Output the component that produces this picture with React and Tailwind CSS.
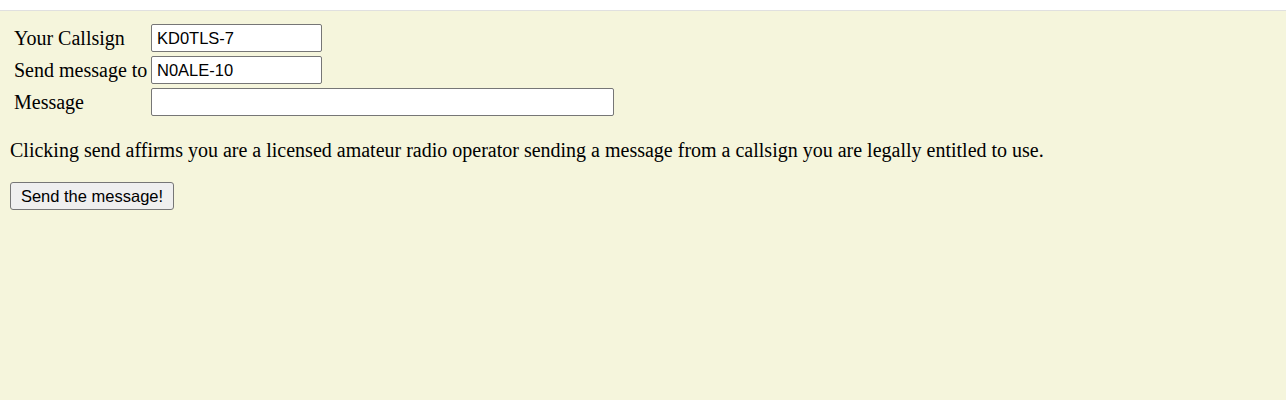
const serif = { fontFamily: '"Liberation Serif", "Times New Roman", serif' };

function Field({ label, value, width }) {
  return (
    <div className="flex h-[32px] items-center">
      <label className="w-[141px] shrink-0 whitespace-nowrap pl-[4px] text-[20px] leading-[23px] text-black">{label}</label>
      <input
        type="text"
        defaultValue={value}
        className={`${width} h-[28px] shrink-0 rounded-[2px] border border-[#767676] bg-white px-[5px] font-['Liberation_Sans',Arial,sans-serif] text-[16.5px] text-black outline-none`}
      />
    </div>
  );
}

export default function App() {
  return (
    <div className="flex h-screen flex-col bg-[#f5f5dc]" style={serif}>
      <div className="h-[11px] shrink-0 border-b border-[#e0e0e0] bg-white" />
      <div className="px-[10px] pt-[11px]">
        <div className="flex flex-col">
          <Field label="Your Callsign" value="KD0TLS-7" width="w-[171px]" />
          <Field label="Send message to" value="N0ALE-10" width="w-[171px]" />
          <Field label="Message" value="" width="w-[463px]" />
        </div>
        <p className="mt-[21px] text-[20px] leading-[23px] text-black">
          Clicking send affirms you are a licensed amateur radio operator sending a message from a callsign you are legally entitled to use.
        </p>
        <button
          type="button"
          className="mt-[20px] h-[28px] w-[164px] rounded-[3px] border border-[#767676] bg-[#efefef] font-['Liberation_Sans',Arial,sans-serif] text-[16.5px] text-black"
        >
          Send the message!
        </button>
      </div>
    </div>
  );
}
